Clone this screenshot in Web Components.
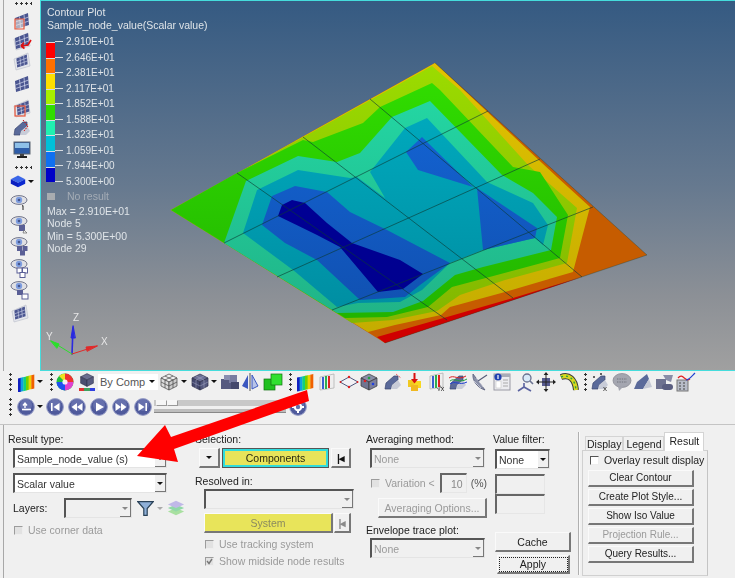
<!DOCTYPE html>
<html>
<head>
<meta charset="utf-8">
<title>Contour Plot</title>
<style>
  html, body { margin: 0; background: #f0f0f0; }
  body { width: 735px; height: 578px; overflow: hidden; font: 10.5px/12px "Liberation Sans", Arial, sans-serif; color: #222; }
</style>
</head>
<body>
<hv-app></hv-app>
<script>
// small svg helpers for the toolbar icons, all drawn on a 20x20 box
const meshTile = (fill = "#4a5590", line = "#d8dcf0") => `
  <polygon points="3,7 16,2 17,14 4,18" fill="${fill}"/>
  <path d="M7.5,5.5 L8.5,16.5 M12,3.7 L13,15.3 M3.5,11 L16.5,6 M3.8,14.5 L16.8,10" stroke="${line}" stroke-width=".7" fill="none"/>`;
const paleTile = `
  <polygon points="2,8 16,2 18,15 4,19" fill="#e4e6ec" stroke="#b8bcc8" stroke-width=".6"/>`;
const rainbow = (x1, x2) => {
  const c = ["#1020c0", "#10a0e0", "#10d080", "#70d000", "#f0d000", "#f06000"];
  const w = (x2 - x1) / c.length;
  return c.map((k, i) => `<rect x="${x1 + i * w}" y="3" width="${w + .3}" height="14" fill="${k}"/>`).join("");
};
const eye = `
  <ellipse cx="9" cy="6" rx="8" ry="4.4" fill="#e0e0e4" stroke="#70748a" stroke-width="1"/>
  <circle cx="9" cy="6" r="3.2" fill="#7f9ee0"/><circle cx="9" cy="6" r="1.3" fill="#46568c"/>`;
const blueDisc = (inner) => `
  <circle cx="10" cy="10" r="8.4" fill="#4f5a9c" stroke="#9aa0c8" stroke-width="1"/>
  <circle cx="10" cy="8" r="6" fill="#7a84bc" opacity=".55"/>${inner}`;
const bentPart = (fill = "#5a6a9a") => `
  <path d="M2,17 L3,11 L11,4 L15,4 L15,8 L9,13 L8,17 Z" fill="${fill}" stroke="#39456e" stroke-width=".7"/>
  <path d="M8,17 L9,13 L15,8 L18,13 L14,17 Z" fill="#c8ccd8"/>`;
const cube = (top, left, right, line) => `
  <polygon points="10,2 18,6 10,10 2,6" fill="${top}" stroke="${line}" stroke-width=".7"/>
  <polygon points="2,6 10,10 10,18 2,14" fill="${left}" stroke="${line}" stroke-width=".7"/>
  <polygon points="18,6 10,10 10,18 18,14" fill="${right}" stroke="${line}" stroke-width=".7"/>`;

const ICONS = {
  frameMesh: `${meshTile()}<polygon points="3,8 12,8 12,18 3,18" fill="#f0e8e0" fill-opacity=".6" stroke="#e8553a" stroke-width="1.2"/>`,
  meshArrow: `${paleTile}${meshTile()}<path d="M19,9 L16,14 L9,15 M9,15 L12,11.5 M9,15 L12.5,17.5" stroke="#e01010" stroke-width="1.6" fill="none"/>`,
  meshSmall: `${paleTile}<g transform="translate(2,2) scale(.8)">${meshTile()}</g>`,
  mesh: meshTile(),
  frameMesh2: `${paleTile}<g transform="translate(2,1) scale(.9)">${meshTile()}</g><rect x="3" y="8" width="10" height="10" fill="none" stroke="#e8553a" stroke-width="1.2"/>`,
  bentRed: `${bentPart()}<path d="M11,2 L16,8 M16,8 L12,13" stroke="#d81010" stroke-width="1" stroke-dasharray="1.6 1" fill="none"/>`,
  monitor: `<rect x="2" y="2" width="16" height="12" fill="#2d5ca8" stroke="#5a6470"/><rect x="3" y="3" width="14" height="5" fill="#8ec0e8"/><rect x="8" y="14" width="4" height="2" fill="#444"/><rect x="5" y="16" width="10" height="2" fill="#222"/>`,
  solidBlue: `<polygon points="10,4 18,8 10,12 2,8" fill="#3a66e8"/><polygon points="2,8 10,12 10,17 2,13" fill="#0a1ec0"/><polygon points="18,8 10,12 10,17 18,13" fill="#0a28d0"/>`,
  eye1: `${eye}<path d="M12,12 L13,11.6 V16" stroke="#222" fill="none"/>`,
  eye2: `${eye}<rect x="9" y="10" width="6" height="6" fill="#5a5f96"/><path d="M14,15 l3,3 h-4 z" fill="#eee" stroke="#555" stroke-width=".6"/>`,
  eye3: `${eye}<rect x="7" y="10" width="5" height="5" fill="#5a5f96"/><rect x="12.5" y="10" width="5" height="5" fill="#5a5f96"/><rect x="10" y="14.5" width="5" height="5" fill="#5a5f96"/>`,
  eye4: `${eye}<g fill="#fff" stroke="#5a5f96" stroke-width="1"><rect x="7" y="10" width="5" height="5"/><rect x="12.5" y="10" width="5" height="5"/><rect x="10" y="14.5" width="5" height="5"/></g>`,
  eye5: `${eye}<rect x="7" y="10" width="6" height="5" fill="#5a5f96"/><rect x="12" y="14" width="6" height="5" fill="#fff" stroke="#5a5f96"/>`,
  meshRainbow: `<g transform="skewY(-14) translate(0,4)">${rainbow(2, 18)}</g>`,
  wheel: `<circle cx="10" cy="10" r="8.5" fill="#20c040"/><path d="M10,10 L10,1.5 A8.5,8.5 0 0 1 18.5,10 Z" fill="#f03030"/><path d="M10,10 L18.5,10 A8.5,8.5 0 0 1 10,18.5 Z" fill="#e040d0"/><path d="M10,10 L10,18.5 A8.5,8.5 0 0 1 1.5,10 Z" fill="#2050f0"/><path d="M10,10 L4,4 A8.5,8.5 0 0 1 10,1.5 Z" fill="#f0e020"/><circle cx="10" cy="10" r="2.6" fill="#fff" opacity=".9"/>`,
  cubeBar: `<g transform="translate(2,0) scale(.8)">${cube("#6a6e90", "#4a4e70", "#585c80", "#2c2e48")}</g><rect x="2" y="16" width="16" height="3" fill="#40a060"/><rect x="2" y="16" width="5" height="3" fill="#e03030"/><rect x="13" y="16" width="5" height="3" fill="#3040e0"/>`,
  cubeWire: `${cube("#eee", "#ddd", "#ccc", "#444")}<path d="M6,4 L14,8 M14,4 L6,8 M6,8 V16 M14,8 V16 M2,10 L10,14 L18,10" stroke="#444" stroke-width=".7" fill="none"/>`,
  cubeSolid: `${cube("#6c7096", "#44486e", "#55597e", "#2c2e48")}<path d="M6,4 L14,8 M14,4 L6,8 M6,8 V16 M14,8 V16 M2,10 L10,14 L18,10" stroke="#a8acc8" stroke-width=".5" fill="none"/>`,
  blocks: `<rect x="1" y="7" width="11" height="10" fill="#565a80"/><rect x="9" y="3" width="8" height="8" fill="#787ca0"/><rect x="11" y="10" width="8" height="7" fill="#44486c"/><rect x="4" y="3" width="6" height="5" fill="#8a8eb0"/>`,
  mirror: `<path d="M8,3 L2,14 L8,17 Z" fill="#3c58c0"/><path d="M12,3 L18,14 L12,17 Z" fill="#b8c4e8" stroke="#3c58c0"/><path d="M10,1 V19" stroke="#555" stroke-width="1"/>`,
  greenSquares: `<rect x="1" y="7" width="11" height="11" fill="#20c020" stroke="#107010" stroke-width=".7"/><rect x="8" y="2" width="11" height="11" fill="#30e030" stroke="#107010" stroke-width=".7"/>`,
  rainbowBox: `<g transform="skewY(-12) translate(0,3)">${rainbow(2, 18)}</g>`,
  columns: `<polygon points="3,5 17,2 17,16 3,18" fill="#eee" stroke="#aaa" stroke-width=".7"/><path d="M6,5 V17" stroke="#3a60d0" stroke-width="2"/><path d="M9,4 V17" stroke="#30b050" stroke-width="2"/><path d="M12,4 V16" stroke="#e02020" stroke-width="2"/>`,
  diamond: `<polygon points="10,5 19,10 10,15 1,10" fill="#f2f2f6" stroke="#50587c" stroke-width="1"/><circle cx="10" cy="5" r="1.2" fill="#e02020"/><circle cx="10" cy="15" r="1.2" fill="#e02020"/><circle cx="1.5" cy="10" r="1" fill="#e02020"/><circle cx="18.5" cy="10" r="1" fill="#e02020"/>`,
  cubeDots: `${cube("#8a8ea8", "#707490", "#7c809c", "#333")}<circle cx="6" cy="9" r="1.3" fill="#e02020"/><circle cx="14" cy="12" r="1.3" fill="#2040e0"/><circle cx="10" cy="6" r="1.3" fill="#20a040"/>`,
  bentDash: `${bentPart()}<path d="M13,2 L18,6" stroke="#e04040" stroke-dasharray="1 1" fill="none"/>`,
  yellowDrop: `<rect x="4" y="8" width="7" height="7" fill="#f0c820"/><rect x="10" y="9" width="7" height="7" fill="#f8d820"/><rect x="7" y="13" width="7" height="6" fill="#f0b820"/><path d="M10.5,1 V10" stroke="#d81010" stroke-width="2"/><path d="M7,7 L10.5,11.5 L14,7 Z" fill="#d81010"/>`,
  barsRoot: `<polygon points="1,4 14,1 14,15 1,17" fill="#eee" stroke="#aaa" stroke-width=".7"/><path d="M4,4 V16" stroke="#3a60d0" stroke-width="2"/><path d="M7,3 V16" stroke="#30b050" stroke-width="2"/><path d="M10,3 V15" stroke="#e02020" stroke-width="2"/><text x="8" y="19" font-family="Liberation Sans" font-size="7" fill="#222">√x</text>`,
  curves: `${bentPart("#5a6a9a")}<path d="M1,6 C6,2 10,9 18,4" stroke="#d82020" fill="none"/><path d="M2,9 C7,5 11,12 19,7" stroke="#20a040" fill="none"/><path d="M2,12 C7,8 11,14 19,10" stroke="#2040d0" fill="none"/>`,
  dish: `<path d="M3,2 C2,9 8,16 15,18 Z" fill="#8a90a8" stroke="#555c78" stroke-width=".8"/><path d="M6,6 L13,15 M4,9 L11,16" stroke="#d8dae6" stroke-width=".7"/><path d="M8,9 L17,3" stroke="#555c78" stroke-width="1.2"/>`,
  info: `<rect x="2" y="2" width="16" height="16" fill="#ececf0" stroke="#9a9aa4"/><rect x="2" y="2" width="16" height="3" fill="#a8acb8"/><circle cx="6" cy="5" r="3.6" fill="#2040b0"/><rect x="5.4" y="3" width="1.2" height="4" fill="#fff"/><rect x="4" y="9" width="5" height="7" fill="#fff" stroke="#bbb" stroke-width=".5"/><path d="M11,8 H16 M11,11 H16 M11,14 H16" stroke="#aaa"/>`,
  axisMag: `<path d="M9,11 V15 L3,19 M9,15 L16,19" stroke="#5a62a0" stroke-width="1.6" fill="none"/><circle cx="12" cy="6" r="4" fill="#d8e8f8" stroke="#6a7290" stroke-width="1.3"/><path d="M15,9 L18,12" stroke="#6a7290" stroke-width="1.6"/>`,
  move: `<rect x="6" y="6" width="8" height="8" fill="#565a90"/><path d="M10,1 V19 M1,10 H19" stroke="#222" stroke-width="1"/><path d="M10,0 l-2.4,3 h4.8 z M10,20 l-2.4,-3 h4.8 z M0,10 l3,-2.4 v4.8 z M20,10 l-3,-2.4 v4.8 z" fill="#222"/>`,
  bentYellow: `<path d="M2,5 C10,2 16,7 17,18" stroke="#3a3a3a" stroke-width="6" fill="none"/><path d="M2,5 C10,2 16,7 17,18" stroke="#d8d820" stroke-width="4" fill="none"/><path d="M2,5 C10,2 16,7 17,18" stroke="#2ea040" stroke-width="1.4" stroke-dasharray="2 3" fill="none"/>`,
  bentX: `${bentPart()}<circle cx="4" cy="5" r="1" fill="#333"/><circle cx="11" cy="2" r="1" fill="#333"/><text x="13" y="19" font-family="Liberation Sans" font-size="8" fill="#222">x</text>`,
  chat: `<ellipse cx="10" cy="8.5" rx="9" ry="7" fill="#a4a6b0" stroke="#82848e" stroke-width=".7"/><path d="M6,14 L7,19 L11,15 Z" fill="#a4a6b0"/><path d="M5,7 H15 M5,10 H15" stroke="#70727c" stroke-dasharray="1.4 1"/>`,
  wing: `<path d="M1,17 L4,10 L14,2 L16,7 L10,17 Z" fill="#5a6a9a"/><path d="M10,17 L16,7 L19,15 Z" fill="#c4c8d4"/>`,
  wing2: `<rect x="1" y="7" width="10" height="10" fill="#6e7290"/><path d="M8,3 L18,3 L16,10 L11,8 Z" fill="#8a8ea8"/><rect x="7" y="12" width="11" height="6" rx="3" fill="#5a5e80"/>`,
  calcRed: `<rect x="1" y="8" width="11" height="11" fill="#b8bcc8" stroke="#777"/><path d="M3,11 H5 M7,11 H9 M3,14 H5 M7,14 H9 M3,17 H5 M7,17 H9" stroke="#444"/><path d="M2,6 C7,0 9,11 14,7" stroke="#e02020" fill="none" stroke-width="1.2"/><path d="M10,8 C13,8 16,4 19,1" stroke="#2040d0" fill="none" stroke-width="1.2"/>`,
  plot: blueDisc(`<path d="M6,12.5 H15" stroke="#fff" stroke-width="1.6"/><path d="M9,6 V11 M7,8.5 L9,6 L11,8.5" stroke="#fff" stroke-width="1.4" fill="none"/>`),
  first: blueDisc(`<path d="M6,6 H7.6 V14 H6 Z M14.5,6 V14 L8.5,10 Z" fill="#fff"/>`),
  rewind: blueDisc(`<path d="M10,6 V14 L4.5,10 Z M15.5,6 V14 L10,10 Z" fill="#fff"/>`),
  play: blueDisc(`<path d="M7,5.5 V14.5 L15,10 Z" fill="#fff"/>`),
  forward: blueDisc(`<path d="M10,6 V14 L15.5,10 Z M4.5,6 V14 L10,10 Z" fill="#fff"/>`),
  last: blueDisc(`<path d="M14,6 H12.4 V14 H14 Z M5.5,6 V14 L11.5,10 Z" fill="#fff"/>`),
  gear: blueDisc(`<circle cx="10" cy="10" r="3.2" fill="none" stroke="#fff" stroke-width="2"/><path d="M10,4 V6 M10,14 V16 M4,10 H6 M14,10 H16" stroke="#fff" stroke-width="2"/>`),
  filter: `<path d="M1,2 H19 L12,10 V18 H8 V10 Z" fill="#8fb0d8" stroke="#2a4258" stroke-width="1.4"/>`,
  layers: `<polygon points="10,10 19,14 10,18 1,14" fill="#a8e0a0"/><polygon points="10,6 19,10 10,14 1,10" fill="#90d8a8"/><polygon points="10,2 19,6 10,10 1,6" fill="#c0b8e8"/>`,
};

class ToolIcon extends HTMLElement {
  connectedCallback() {
    const size = this.getAttribute("size") || 20;
    this.attachShadow({ mode: "open" }).innerHTML = `
      <style>:host { display: block; width: ${size}px; height: ${size}px; flex: none; } svg { display: block; }</style>
      <svg width="${size}" height="${size}" viewBox="0 0 20 20">${ICONS[this.getAttribute("name")] || ""}</svg>`;
  }
}

class GripDots extends HTMLElement {
  constructor() {
    super();
    this.attachShadow({ mode: "open" }).innerHTML = `
      <style>
        :host { display: block; flex: none; background-image: radial-gradient(circle, #333 0 1px, transparent 1.2px); }
        :host([dir-h]) { width: 18px; height: 3px; background-size: 5px 3px; }
        :host(:not([dir-h])) { width: 3px; height: 20px; background-size: 3px 5px; }
      </style>`;
  }
}

class DropArrow extends HTMLElement {
  constructor() {
    super();
    this.attachShadow({ mode: "open" }).innerHTML = `
      <style>:host { display: block; flex: none; width: 0; height: 0; border: 3px solid transparent; border-top: 3px solid var(--arrow, #111); border-bottom: 0; }</style>`;
  }
}

class HvSidebar extends HTMLElement {
  constructor() {
    super();
    const rows = [["frameMesh", 6], ["meshArrow", 0], ["meshSmall", 0], ["mesh", 3], ["frameMesh2", 4], ["bentRed", 0], ["monitor", 2]];
    const eyes = [["eye1", 4], ["eye2", 1], ["eye3", 1], ["eye4", 2], ["eye5", 2], ["meshSmall", 3]];
    this.attachShadow({ mode: "open" }).innerHTML = `
      <style>
        :host { display: flex; flex-direction: column; box-sizing: border-box; border-left: 1px solid #a8a8a8; margin-left: 3px; width: 37px; padding-top: 2px; }
        tool-icon { margin-left: 8px; }
        grip-dots { margin-left: 10px; }
        .solid { display: flex; align-items: center; gap: 1px; margin: 0 0 0 5px; }
        .solid tool-icon { margin-left: 0; }
        .eye { margin-left: 6px; }
      </style>
      <grip-dots dir-h></grip-dots>
      ${rows.map(([n, m]) => `<tool-icon name="${n}" style="margin-top:${m}px"></tool-icon>`).join("")}
      <grip-dots dir-h style="margin-top:6px"></grip-dots>
      <div class="solid" style="margin-top:3px"><tool-icon name="solidBlue" size="18"></tool-icon><drop-arrow></drop-arrow></div>
      ${eyes.map(([n, m]) => `<tool-icon class="eye" name="${n}" style="margin-top:${m}px"></tool-icon>`).join("")}`;
  }
}

class HvLegend extends HTMLElement {
  constructor() {
    super();
    const bands = ["#ff0000", "#ff7000", "#ffe000", "#a8f000", "#30dc00", "#20f0b0", "#00c0d8", "#1070f0", "#0000c8"];
    const labels = ["2.910E+01", "2.646E+01", "2.381E+01", "2.117E+01", "1.852E+01", "1.588E+01", "1.323E+01", "1.059E+01", "7.944E+00", "5.300E+00"];
    this.attachShadow({ mode: "open" }).innerHTML = `
      <style>
        :host { position: absolute; left: 6px; top: 5px; color: #dfe4e8; font: 10.5px/12.5px "Liberation Sans", Arial, sans-serif; display: block; }
        .scale { position: relative; margin: 11px 0 0 -1px; display: grid; grid-template-columns: 9px 1fr; width: 90px; height: 140px; }
        .bars { display: flex; flex-direction: column; }
        .bars i { display: block; flex: 1; border-top: 1px solid #d8dce0; box-sizing: border-box; }
        .names { display: flex; flex-direction: column; justify-content: space-between; margin: -6px 0 -6px 11px; font-size: 10px; line-height: 12px; }
        .names b { font-weight: normal; position: relative; }
        .names b::before { content: ""; position: absolute; left: -11px; top: 5px; width: 8px; height: 1px; background: #d8dce0; }
        .none { display: flex; align-items: center; gap: 12px; margin: 8px 0 2px; color: #a4acb6; }
        .none i { width: 8px; height: 7px; background: #a8acb0; }
      </style>
      <div>Contour Plot</div>
      <div>Sample_node_value(Scalar value)</div>
      <div class="scale">
        <div class="bars">${bands.map(c => `<i style="background:${c}"></i>`).join("")}</div>
        <div class="names">${labels.map(t => `<b>${t}</b>`).join("")}</div>
      </div>
      <div class="none"><i></i><span>No result</span></div>
      <div>Max = 2.910E+01</div>
      <div>Node 5</div>
      <div>Min = 5.300E+00</div>
      <div>Node 29</div>`;
  }
}

class HvMesh extends HTMLElement {
  constructor() {
    super();
    const grads = {
      yellow: ["#e2c200", "#c4ac00"], lime: ["#9cdc00", "#80b400"], green: ["#32e000", "#20b000"],
      teal: ["#24dca8", "#20b084"], cyan: ["#00b0c4", "#008a9e"], blue: ["#1468dc", "#104eac"], dark: ["#00009c", "#00008c"],
    };
    const defs = Object.entries(grads).map(([id, [a, b]]) =>
      `<linearGradient id="${id}" gradientUnits="userSpaceOnUse" x1="0" y1="60" x2="0" y2="340"><stop offset="0" stop-color="${a}"/><stop offset="1" stop-color="${b}"/></linearGradient>`).join("");
    // x offset of the canvas is 41, y offset 1: points below are in screenshot coordinates
    this.attachShadow({ mode: "open" }).innerHTML = `
      <style>:host { position: absolute; inset: 0; display: block; } svg { display: block; }</style>
      <svg width="694" height="369" viewBox="41 1 694 369">
        <defs>${defs}</defs>
        <polygon fill="#c65c00" points="171,210 435,63 647,255 385,343"/>
        <polygon fill="#d00000" points="377,337 385,343 582,277 513,298 447,317"/>
        <polygon fill="url(#yellow)" points="171,210 435,63 557,177 590,207 573,272 505,292 450,307 441,315 395,325 368,332"/>
        <polygon fill="url(#lime)" points="171,210 432,66 460,90 528,165 577,208 567,263 505,280 460,295 437,311 393,320 352,323"/>
        <polygon fill="url(#green)" points="171,210 237,173 303,140 313,142 363,123 380,107 432,83 440,90 513,167 540,172 568,215 560,258 497,275 452,287 428,307 387,317 345,318"/>
        <polygon fill="url(#teal)" points="224,243 246,181 298,156 337,162 360,153 392,117 430,101 502,175 533,193 557,217 551,250 483,267 455,275 423,301 393,312 337,313"/>
        <polygon fill="url(#cyan)" points="243,233 257,190 298,170 350,178 357,177 385,198 370,172 405,128 427,118 487,182 533,203 548,225 543,245 535,238 483,250 450,263 422,290 400,302 358,303 337,307 293,270"/>
        <polygon fill="url(#blue)" points="406,152 422,137 473,187 418,170"/>
        <polygon fill="url(#blue)" points="477,188 537,228 535,238 483,250"/>
        <polygon fill="url(#blue)" points="262,225 272,196 295,186 327,192 350,212 387,230 450,263 420,285 405,297 360,300 317,260 285,243"/>
        <polygon fill="url(#dark)" points="278,216 282,205 292,200 305,203 327,223 352,243 400,260 423,274 403,289 378,292 340,247 317,235"/>
        <g stroke="#0c3a34" stroke-opacity=".62" stroke-width="1" fill="none">
          <path d="M237,173 L447,320"/><path d="M303,137 L513,298"/><path d="M370,99 L582,277"/>
          <path d="M224,243 L488,111"/><path d="M277,277 L540,159"/><path d="M332,310 L593,207"/>
          <path d="M435,63 L647,255 L385,343" stroke-opacity=".3"/>
        </g>
        <g stroke-linecap="round" fill="none">
          <path d="M72,354 L73,328" stroke="#2a2ae0" stroke-width="1.6"/><path d="M73,326 L71,338 H75 Z" fill="#2a2ae0" stroke="#2a2ae0"/>
          <path d="M72,354 L97,346" stroke="#e02a2a" stroke-width="1"/><path d="M97,346 L86,347 L87,351 Z" fill="#e02a2a" stroke="#e02a2a"/>
          <path d="M72,354 L51,341" stroke="#2ae02a" stroke-width="1"/><path d="M51,341 L59,344 L57,348 Z" fill="#2ae02a" stroke="#2ae02a"/>
        </g>
        <g font-family="Liberation Sans" font-size="10" fill="#e6e6e6">
          <text x="73" y="321">Z</text><text x="101" y="345">X</text><text x="46" y="340">Y</text>
        </g>
      </svg>`;
  }
}

class HvViewport extends HTMLElement {
  constructor() {
    super();
    this.attachShadow({ mode: "open" }).innerHTML = `
      <style>
        :host { position: relative; display: block; flex: 1; box-sizing: border-box; border: 1px solid #45dcdc; border-right: 0;
                background: linear-gradient(180deg, #355a82 0%, #66798f 50%, #8c9096 80%, #a0a0a0 100%); overflow: hidden; }
      </style>
      <hv-mesh></hv-mesh>
      <hv-legend></hv-legend>`;
  }
}

class HvToolbars extends HTMLElement {
  constructor() {
    super();
    // name, centre x. "a" is the small drop arrow, "g" a grip, "c" the By Comp combo
    const top = [["g", 10], ["meshRainbow", 26], ["a", 40], ["g", 51], ["wheel", 65], ["cubeBar", 87], ["c", 128], ["cubeWire", 169], ["a", 184], ["cubeSolid", 200], ["a", 214], ["blocks", 230], ["mirror", 250], ["greenSquares", 273], ["g", 290], ["rainbowBox", 305], ["columns", 327], ["diamond", 349], ["cubeDots", 369], ["bentDash", 393], ["yellowDrop", 414], ["barsRoot", 439], ["curves", 458], ["dish", 480], ["info", 502], ["axisMag", 525], ["move", 546], ["bentYellow", 569], ["g", 585], ["bentX", 600], ["chat", 622], ["wing", 643], ["wing2", 665], ["calcRed", 686]];
    const bottom = [["g", 10], ["plot", 26], ["a", 40], ["first", 55], ["rewind", 77], ["play", 99], ["forward", 121], ["last", 143], ["s", 220], ["gear", 298]];
    this.attachShadow({ mode: "open" }).innerHTML = `
      <style>
        :host { display: block; box-sizing: border-box; height: 54px; border-bottom: 1px solid #c4c4c4; }
        .row { display: flex; align-items: center; height: 21px; }
        .row + .row { margin-top: 4px; }
        .combo { width: 60px; height: 16px; box-sizing: border-box; background: #fff; display: flex; align-items: center; justify-content: space-between; padding: 0 3px 0 2px; color: #555; font-size: 11px; }
        .slider { width: 132px; height: 14px; display: flex; flex-direction: column; gap: 3px; }
        .slider .track { height: 6px; background: #c8c8c8; display: flex; padding-left: 2px; }
        .slider .track i { width: 11px; background: #f6f6f6; border: 1px solid #999; border-left-color: #f6f6f6; border-top-color: #f6f6f6; box-sizing: border-box; }
        .slider .low { height: 3px; background: #bdbdbd; border-bottom: 1px solid #888; }
      </style>
      <div class="row">${this.build(top)}</div>
      <div class="row">${this.build(bottom)}</div>`;
  }
  // walks the items left to right and turns their centres into margins
  build(items) {
    let pos = 0;
    return items.map(([n, cx]) => {
      const w = n === "g" ? 3 : n === "a" ? 6 : n === "c" ? 60 : n === "s" ? 132 : 20;
      const m = cx - w / 2 - pos;
      pos = cx + w / 2;
      const st = `style="margin-left:${m}px"`;
      if (n === "g") return `<grip-dots ${st}></grip-dots>`;
      if (n === "a") return `<drop-arrow ${st}></drop-arrow>`;
      if (n === "c") return `<div class="combo" ${st}><span>By Comp</span><drop-arrow></drop-arrow></div>`;
      if (n === "s") return `<div class="slider" ${st}><div class="track"><i></i><i></i></div><div class="low"></div></div>`;
      return `<tool-icon name="${n}" ${st}></tool-icon>`;
    }).join("");
  }
}

class WinCombo extends HTMLElement {
  constructor() {
    super();
    this.attachShadow({ mode: "open" }).innerHTML = `
      <style>
        :host { display: flex; flex: none; height: 20px; box-sizing: border-box; border: 1px solid #e4e4e4; border-top: 2px solid #555; border-left: 2px solid #555; background: #fff; align-items: center; color: #333; }
        :host([disabled]) { background: #f0f0f0; color: #9a9a9a; --arrow: #888; }
        .v { flex: 1; padding-left: 2px; white-space: nowrap; overflow: hidden; }
        .b { width: 10px; align-self: stretch; display: flex; align-items: center; justify-content: center; background: #f0f0f0; border-right: 1px solid #777; border-bottom: 1px solid #777; }
      </style>
      <div class="v"><slot></slot></div>
      <div class="b"><drop-arrow></drop-arrow></div>`;
  }
}

class WinInput extends HTMLElement {
  constructor() {
    super();
    this.attachShadow({ mode: "open" }).innerHTML = `
      <style>
        :host { display: flex; flex: none; height: 20px; box-sizing: border-box; border-top: 2px solid #666; border-left: 2px solid #666; background: #f0f0f0; border-right: 1px solid #e6e6e6; border-bottom: 1px solid #e6e6e6; color: #888; justify-content: flex-end; align-items: center; padding-right: 3px; }
      </style><slot></slot>`;
  }
}

class WinButton extends HTMLElement {
  constructor() {
    super();
    this.attachShadow({ mode: "open" }).innerHTML = `
      <style>
        :host { display: flex; flex: none; height: 20px; box-sizing: border-box; align-items: center; justify-content: center; background: #f0f0f0; color: #222;
                border-top: 1px solid #fafafa; border-left: 1px solid #fafafa; border-right: 2px solid #777; border-bottom: 2px solid #777; white-space: nowrap; }
        :host([disabled]) { color: #9a9a9a; }
        :host([yellow]) { background: #e8e45a; color: #2a2a10; }
        :host([yellow][disabled]) { color: #8a8a60; }
        :host([active]) { box-shadow: inset 0 0 0 2px #30dcdc; border-color: #555; border-width: 1px; }
        :host([dotted]) { outline: 1px dotted #222; outline-offset: -3px; }
      </style><slot></slot>`;
  }
}

class WinCheck extends HTMLElement {
  constructor() {
    super();
    const on = this.hasAttribute("checked");
    this.attachShadow({ mode: "open" }).innerHTML = `
      <style>
        :host { display: flex; align-items: center; gap: 5px; height: 12px; flex: none; color: #9a9a9a; white-space: nowrap; }
        :host([enabled]) { color: #222; }
        .box { width: 9px; height: 9px; box-sizing: border-box; border: 1px solid #9c9c9c; border-right-color: #eee; border-bottom-color: #eee; background: #e2e2e2; flex: none; }
        :host([enabled]) .box { background: #fff; border-top-color: #555; border-left-color: #555; }
        svg { display: block; }
      </style>
      <div class="box">${on ? `<svg width="7" height="7" viewBox="0 0 7 7"><path d="M1,3 L3,5.5 L6,1" stroke="#777" stroke-width="1.4" fill="none"/></svg>` : ""}</div>
      <slot></slot>`;
  }
}

class ResultTabs extends HTMLElement {
  constructor() {
    super();
    const btns = [["Clear Contour"], ["Create Plot Style..."], ["Show Iso Value"], ["Projection Rule...", 1], ["Query Results..."]];
    this.attachShadow({ mode: "open" }).innerHTML = `
      <style>
        :host { display: block; width: 126px; margin: 7px 0 0 2px; flex: none; }
        .tabs { display: flex; align-items: flex-end; height: 18px; padding-left: 3px; position: relative; z-index: 1; }
        .tab { height: 14px; line-height: 14px; box-sizing: border-box; border: 1px solid #d4d4d4; border-bottom: 0; padding: 0 1px; background: #f0f0f0; }
        .tab.mid { padding: 0 2px; }
        .tab.on { background: #fff; line-height: 17px; padding: 0 4px; margin-bottom: -1px; height: 19px; }
        .body { box-sizing: border-box; height: 126px; border: 1px solid #d0d0d0; border-right-color: #c4c4c4; padding: 3px 0 0 5px; display: flex; flex-direction: column; gap: 2px; }
        win-check { margin: 0 0 2px 2px; }
        win-button { width: 106px; height: 17px; font-size: 10px; }
      </style>
      <div class="tabs"><div class="tab">Display</div><div class="tab mid">Legend</div><div class="tab on">Result</div></div>
      <div class="body">
        <win-check enabled>Overlay result display</win-check>
        ${btns.map(([t, d]) => `<win-button ${d ? "disabled" : ""}>${t}</win-button>`).join("")}
      </div>`;
  }
}

class ResultPanel extends HTMLElement {
  constructor() {
    super();
    const arrowBtn = (w) => `<win-button style="width:${w}px"><drop-arrow></drop-arrow></win-button>`;
    const endBtn = (w, off) => `<win-button style="width:${w}px;--c:${off ? "#8a8a8a" : "#111"};color:var(--c);font-weight:bold;letter-spacing:-1px" ${off ? "disabled" : ""}>|◂</win-button>`;
    this.attachShadow({ mode: "open" }).innerHTML = `
      <style>
        :host { display: flex; box-sizing: border-box; height: 153px; margin-left: 3px; border-left: 1px solid #a8a8a8; color: #222; }
        .col { display: flex; flex-direction: column; flex: none; padding-top: 8px; box-sizing: border-box; }
        .row { display: flex; align-items: center; flex: none; }
        .dim { color: #9a9a9a; }
        .rule { width: 1px; flex: none; margin: 7px 0 3px; background: #b0b0b0; border-right: 1px solid #fafafa; }
      </style>
      <div class="col" style="width:191px;padding-left:4px">
        <div>Result type:</div>
        <win-combo style="width:154px;margin:3px 0 0 5px">Sample_node_value (s)</win-combo>
        <win-combo style="width:154px;margin:5px 0 0 5px">Scalar value</win-combo>
        <div class="row" style="margin:5px 0 0 5px">
          <span style="width:51px">Layers:</span>
          <win-combo disabled style="width:68px"></win-combo>
          <tool-icon name="filter" size="17" style="margin-left:5px"></tool-icon>
          <drop-arrow style="--arrow:#aaa;margin-left:3px"></drop-arrow>
          <tool-icon name="layers" size="18" style="margin-left:4px"></tool-icon>
        </div>
        <win-check style="margin:6px 0 0 6px">Use corner data</win-check>
      </div>
      <div class="col" style="width:171px">
        <div>Selection:</div>
        <div class="row" style="margin:3px 0 0 4px;gap:2px">
          ${arrowBtn(21)}
          <win-button yellow active style="width:107px">Components</win-button>
          ${endBtn(20)}
        </div>
        <div style="margin-top:7px">Resolved in:</div>
        <win-combo disabled style="width:150px;margin:2px 0 0 9px"></win-combo>
        <div class="row" style="margin:4px 0 0 9px;gap:1px">
          <win-button yellow disabled style="width:129px">System</win-button>
          ${endBtn(17, 1)}
        </div>
        <win-check style="margin:5px 0 0 10px">Use tracking system</win-check>
        <win-check checked style="margin:5px 0 0 10px">Show midside node results</win-check>
      </div>
      <div class="col" style="width:127px">
        <div>Averaging method:</div>
        <win-combo disabled style="width:115px;margin:3px 0 0 4px">None</win-combo>
        <div class="row dim" style="margin:5px 0 0 5px;height:20px">
          <win-check>Variation &lt;</win-check>
          <win-input style="width:27px;margin-left:5px">10</win-input>
          <span style="margin-left:4px;color:#555">(%)</span>
        </div>
        <win-button disabled style="width:109px;margin:5px 0 0 12px">Averaging Options...</win-button>
        <div style="margin-top:6px">Envelope trace plot:</div>
        <win-combo disabled style="width:115px;margin:2px 0 0 4px">None</win-combo>
      </div>
      <div class="col" style="width:85px">
        <div>Value filter:</div>
        <win-combo style="width:55px;margin:4px 0 0 2px">None</win-combo>
        <win-input style="width:50px;margin:5px 0 0 2px"></win-input>
        <win-input style="width:50px;margin:0 0 0 2px"></win-input>
        <win-button style="width:76px;margin:18px 0 0 2px">Cache</win-button>
        <win-button dotted style="width:73px;height:19px;margin:3px 0 0 4px">Apply</win-button>
      </div>
      <div class="rule"></div>
      <result-tabs></result-tabs>`;
  }
}

class HvApp extends HTMLElement {
  constructor() {
    super();
    this.attachShadow({ mode: "open" }).innerHTML = `
      <style>
        :host { position: relative; display: flex; flex-direction: column; width: 735px; height: 578px; overflow: hidden; filter: blur(.45px); }
        .top { display: flex; height: 371px; flex: none; }
        .arrow { position: absolute; left: 0; top: 0; pointer-events: none; }
      </style>
      <div class="top"><hv-sidebar></hv-sidebar><hv-viewport></hv-viewport></div>
      <hv-toolbars></hv-toolbars>
      <result-panel></result-panel>
      <svg class="arrow" width="735" height="578"><polygon fill="#ff0000" points="307,390 171,437 165,425 137,456 178,462 174,449 309,401"/></svg>`;
  }
}

customElements.define("tool-icon", ToolIcon);
customElements.define("grip-dots", GripDots);
customElements.define("drop-arrow", DropArrow);
customElements.define("hv-sidebar", HvSidebar);
customElements.define("hv-legend", HvLegend);
customElements.define("hv-mesh", HvMesh);
customElements.define("hv-viewport", HvViewport);
customElements.define("hv-toolbars", HvToolbars);
customElements.define("win-combo", WinCombo);
customElements.define("win-input", WinInput);
customElements.define("win-button", WinButton);
customElements.define("win-check", WinCheck);
customElements.define("result-tabs", ResultTabs);
customElements.define("result-panel", ResultPanel);
customElements.define("hv-app", HvApp);
</script>
</body>
</html>
